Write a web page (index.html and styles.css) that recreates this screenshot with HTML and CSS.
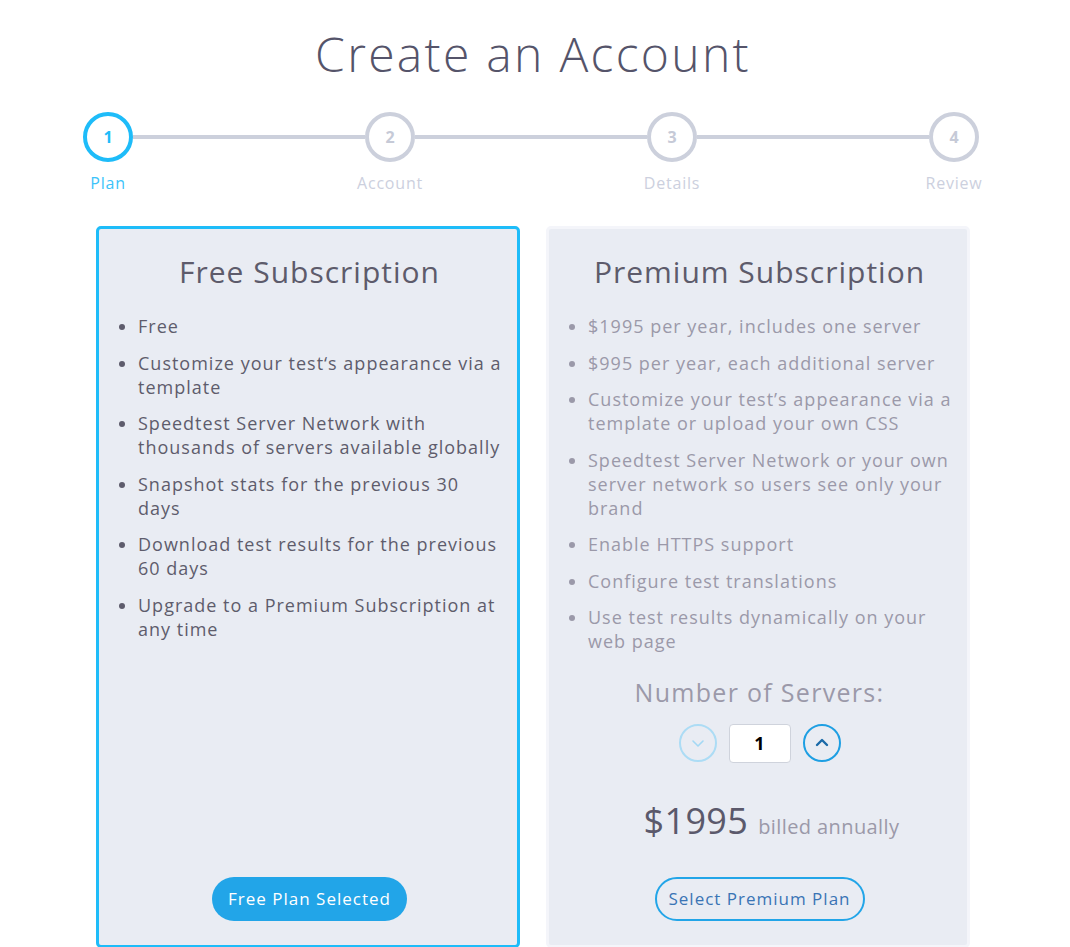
FILE: index.html
```html
<!DOCTYPE html>
<html>
<head>
  <title>Create an Account</title>
  <link rel="stylesheet" href="styles.css">
</head>
<body>
  <div class="page">
    <h1>Create an Account</h1>

    <div class="steps">
      <div class="step active">
        <div class="step-circle">1</div>
        <div class="step-label">Plan</div>
      </div>
      <div class="step-line"></div>
      <div class="step">
        <div class="step-circle">2</div>
        <div class="step-label">Account</div>
      </div>
      <div class="step-line"></div>
      <div class="step">
        <div class="step-circle">3</div>
        <div class="step-label">Details</div>
      </div>
      <div class="step-line"></div>
      <div class="step">
        <div class="step-circle">4</div>
        <div class="step-label">Review</div>
      </div>
    </div>

    <div class="plans">
      <div class="plan selected">
        <h2>Free Subscription</h2>
        <ul class="features">
          <li>Free</li>
          <li>Customize your test‘s appearance via a template</li>
          <li>Speedtest Server Network with thousands of servers available globally</li>
          <li>Snapshot stats for the previous 30 days</li>
          <li>Download test results for the previous 60 days</li>
          <li>Upgrade to a Premium Subscription at any time</li>
        </ul>
        <button type="button" class="btn btn-filled">Free Plan Selected</button>
      </div>

      <div class="plan premium">
        <h2>Premium Subscription</h2>
        <ul class="features">
          <li>$1995 per year, includes one server</li>
          <li>$995 per year, each additional server</li>
          <li>Customize your test’s appearance via a template or upload your own CSS</li>
          <li>Speedtest Server Network or your own server network so users see only your brand</li>
          <li>Enable HTTPS support</li>
          <li>Configure test translations</li>
          <li>Use test results dynamically on your web page</li>
        </ul>

        <div class="servers-label">Number of Servers:</div>
        <div class="servers">
          <button type="button" class="round-btn down" aria-label="Fewer servers">
            <svg width="18" height="18" viewBox="0 0 18 18"><path d="M4 7l5 5 5-5" fill="none" stroke="currentColor" stroke-width="1.6" stroke-linecap="round" stroke-linejoin="round"/></svg>
          </button>
          <input class="servers-input" type="text" value="1">
          <button type="button" class="round-btn up" aria-label="More servers">
            <svg width="18" height="18" viewBox="0 0 18 18"><path d="M4 11l5-5 5 5" fill="none" stroke="currentColor" stroke-width="2.4" stroke-linecap="round" stroke-linejoin="round"/></svg>
          </button>
        </div>

        <div class="price"><span class="amount">$1995</span> <span class="billed">billed annually</span></div>

        <button type="button" class="btn btn-outline">Select Premium Plan</button>
      </div>
    </div>
  </div>
</body>
</html>
```

FILE: styles.css
```css
body {
  margin: 0;
  font-family: "Open Sans", "Noto Sans", sans-serif;
  background: #fff;
  color: #5b596b;
}

.page {
  width: 874px;
  padding-right: 4px;
  margin: 0 auto;
}

h1 {
  margin: 25px 0 0;
  font-size: 48px;
  line-height: 58px;
  font-weight: 300;
  letter-spacing: 2.3px;
  text-align: center;
  color: #55546a;
}

/* stepper */
.steps {
  display: flex;
  align-items: flex-start;
  margin: 29px -9px 0 -13px;
}

.step {
  width: 50px;
  display: flex;
  flex-direction: column;
  align-items: center;
}

.step-circle {
  width: 42px;
  height: 42px;
  border: 4px solid #ccd0dc;
  border-radius: 50%;
  display: flex;
  align-items: center;
  justify-content: center;
  font-size: 16px;
  font-weight: 700;
  color: #c6cad7;
}

.step-label {
  margin-top: 11px;
  font-size: 16px;
  line-height: 20px;
  letter-spacing: 0.8px;
  white-space: nowrap;
  color: #ccd0de;
}

.step.active .step-circle {
  border-color: #1ebcf9;
  color: #1ebcf9;
}

.step.active .step-label {
  color: #3cc3fa;
}

.step-line {
  flex: 1;
  height: 4px;
  margin-top: 23px;
  background: #ccd0dc;
}

/* plans */
.plans {
  display: grid;
  grid-template-columns: 1fr 1fr;
  gap: 26px;
  margin-top: 33px;
}

.plan {
  display: flex;
  flex-direction: column;
  align-items: center;
  background: #e9ecf3;
  border: 3px solid #f4f5fa;
  border-radius: 5px;
  padding: 15px 12px 24px 15px;
}

.plan.selected {
  border-color: #1ebcf9;
}

.plan h2 {
  margin: 11px 0 0;
  font-size: 30px;
  line-height: 34px;
  font-weight: 400;
  letter-spacing: 1px;
  color: #5d5b6b;
}

.features {
  align-self: stretch;
  margin: 25px 0 0;
  padding-left: 24px;
  font-size: 18px;
  line-height: 24px;
  letter-spacing: 1px;
  color: #5e5c6c;
}

.features li {
  margin-bottom: 12.5px;
}

.premium .features {
  color: #9b99a9;
}

.servers-label {
  margin-top: 11px;
  font-size: 25px;
  line-height: 30px;
  letter-spacing: 1.3px;
  color: #9b99a9;
}

.servers {
  display: flex;
  align-items: center;
  gap: 12px;
  margin-top: 17px;
}

.round-btn {
  width: 38px;
  height: 38px;
  padding: 0;
  border-radius: 50%;
  background: transparent;
  display: flex;
  align-items: center;
  justify-content: center;
}

.round-btn.down {
  border: 2px solid #acdcf5;
  color: #a3d8f4;
}

.round-btn.up {
  border: 2.5px solid #1e9fe3;
  color: #1b6aa8;
}

.servers-input {
  width: 62px;
  height: 39px;
  box-sizing: border-box;
  border: 1px solid #cfd3dc;
  border-radius: 4px;
  background: #fff;
  text-align: center;
  font-family: inherit;
  font-size: 18px;
  font-weight: 700;
  color: #000;
}

.price {
  margin: 34px 0 25px 24px;
  line-height: 48px;
  color: #5b596b;
}

.price .amount {
  font-size: 36px;
  letter-spacing: 0.3px;
  margin-right: 6px;
}

.price .billed {
  font-size: 20px;
  letter-spacing: 0.4px;
  color: #9b99a9;
}

.btn {
  margin-top: auto;
  height: 44px;
  border-radius: 22px;
  font-family: inherit;
  font-size: 17px;
  letter-spacing: 1px;
  padding: 0 10px;
}

.btn-filled {
  width: 195px;
  border: none;
  background: #22a5e8;
  color: #fff;
}

.btn-outline {
  width: 210px;
  border: 2.5px solid #22a5e8;
  background: transparent;
  color: #3a74b5;
}
```
